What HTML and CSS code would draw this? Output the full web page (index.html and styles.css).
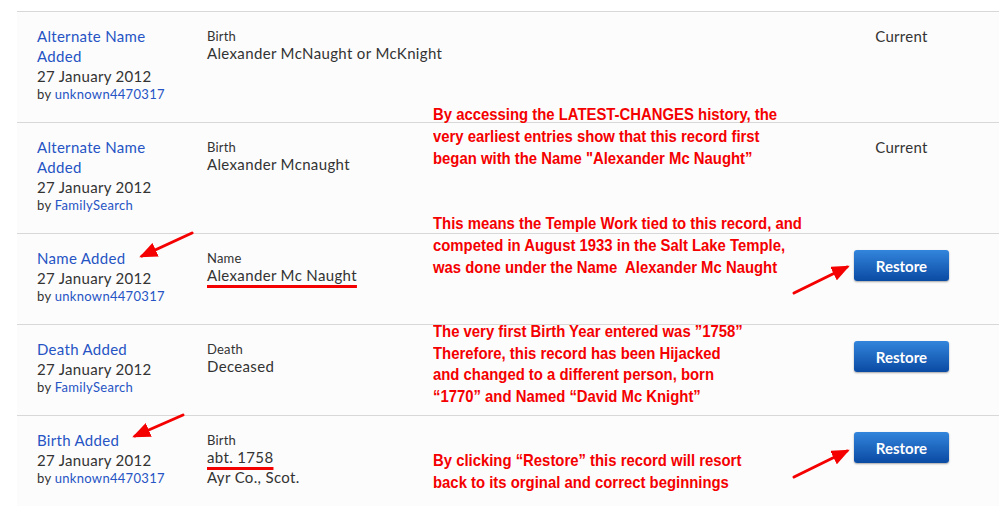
FILE: index.html
```html
<html lang="en">
<head>
<title>Change History</title>
<link rel="stylesheet" href="styles.css">
</head>
<body>
  <div class="page">
    <div class="history">
      <div class="row">
        <div class="what">
          <a class="type">Alternate Name Added</a>
          <div class="date">27 January 2012</div>
          <div class="by">by <a>unknown4470317</a></div>
        </div>
        <div class="detail">
          <div class="label">Birth</div>
          <div class="value">Alexander McNaught or McKnight</div>
        </div>
        <div class="action"><span class="current">Current</span></div>
      </div>
      <div class="row">
        <div class="what">
          <a class="type">Alternate Name Added</a>
          <div class="date">27 January 2012</div>
          <div class="by">by <a>FamilySearch</a></div>
        </div>
        <div class="detail">
          <div class="label">Birth</div>
          <div class="value">Alexander Mcnaught</div>
        </div>
        <div class="action"><span class="current">Current</span></div>
      </div>
      <div class="row">
        <div class="what">
          <a class="type">Name Added</a>
          <div class="date">27 January 2012</div>
          <div class="by">by <a>unknown4470317</a></div>
        </div>
        <div class="detail">
          <div class="label">Name</div>
          <div class="value"><span class="marked">Alexander Mc Naught</span></div>
        </div>
        <div class="action"><button class="restore">Restore</button></div>
      </div>
      <div class="row">
        <div class="what">
          <a class="type">Death Added</a>
          <div class="date">27 January 2012</div>
          <div class="by">by <a>FamilySearch</a></div>
        </div>
        <div class="detail">
          <div class="label">Death</div>
          <div class="value">Deceased</div>
        </div>
        <div class="action"><button class="restore">Restore</button></div>
      </div>
      <div class="row">
        <div class="what">
          <a class="type">Birth Added</a>
          <div class="date">27 January 2012</div>
          <div class="by">by <a>unknown4470317</a></div>
        </div>
        <div class="detail">
          <div class="label">Birth</div>
          <div class="value"><span class="marked">abt. 1758</span></div>
          <div class="value">Ayr Co., Scot.</div>
        </div>
        <div class="action"><button class="restore">Restore</button></div>
      </div>
    </div>

    <!-- annotations drawn over the list -->
    <div class="note note1">By accessing the LATEST-CHANGES history, the<br>very earliest entries show that this record first<br>began with the Name "Alexander Mc Naught&rdquo;</div>
    <div class="note note2">This means the Temple Work tied to this record, and<br>competed in August 1933 in the Salt Lake Temple,<br>was done under the Name&nbsp; Alexander Mc Naught</div>
    <div class="note note3">The very first Birth Year entered was &rdquo;1758&rdquo;<br>Therefore, this record has been Hijacked<br>and changed to a different person, born<br>&ldquo;1770&rdquo; and Named &ldquo;David Mc Knight&rdquo;</div>
    <div class="note note4">By clicking &ldquo;Restore&rdquo; this record will resort<br>back to its orginal and correct beginnings</div>

    <svg class="arrows" width="999" height="512" viewBox="0 0 999 512">
      <defs>
        <marker id="head" markerWidth="6" markerHeight="5" refX="5" refY="2.5" orient="auto" markerUnits="strokeWidth">
          <path d="M0,0 L6,2.5 L0,5 Z" fill="#f40000"/>
        </marker>
      </defs>
      <g stroke="#f40000" stroke-width="3" stroke-linecap="round" marker-end="url(#head)">
        <line x1="192" y1="233" x2="142" y2="256"/>
        <line x1="183" y1="415" x2="135" y2="436"/>
        <line x1="794" y1="293" x2="847" y2="267"/>
        <line x1="794" y1="477" x2="847" y2="451"/>
      </g>
    </svg>
  </div>
</body>
</html>
```

FILE: styles.css
```css
body {
  margin: 0;
  background: #fff;
  font-family: "Lato", "Liberation Sans", sans-serif;
  color: #333;
}

.page {
  position: relative;
  width: 999px;
  height: 512px;
  overflow: hidden;
}

.history {
  margin: 11px 0 0 17px;
  background: #fcfcfc;
}

.row {
  display: grid;
  grid-template-columns: 170px 1fr 95px;
  padding: 14px 50px 19px 20px;
  border-top: 1px solid #d8d8d8;
}

a {
  color: #2654c4;
  text-decoration: none;
}

.type {
  display: block;
  font-size: 15px;
  line-height: 20px;
  width: 130px;
  letter-spacing: 0.3px;
}

.date {
  font-size: 15px;
  line-height: 20px;
  letter-spacing: 0.3px;
}

.by {
  font-size: 13px;
  line-height: 17px;
  letter-spacing: 0.3px;
}

.label {
  font-size: 13px;
  line-height: 14px;
  padding-top: 3px;
  letter-spacing: 0.2px;
}

.value {
  font-size: 15px;
  line-height: 20px;
  letter-spacing: 0.35px;
}

.marked {
  text-decoration: underline 3px #f40000;
  text-underline-offset: 4px;
}

.action {
  text-align: center;
}

.current {
  font-size: 15px;
  line-height: 20px;
  letter-spacing: 0.3px;
}

.restore {
  margin-top: 2px;
  width: 95px;
  height: 31px;
  border: none;
  border-radius: 3px;
  background: linear-gradient(#3385dc, #0a4aa3);
  box-shadow: 0 1px 2px rgba(0, 0, 0, 0.35);
  color: #fff;
  font-family: "Lato", "Liberation Sans", sans-serif;
  font-size: 15px;
  font-weight: bold;
  cursor: pointer;
}

.note {
  position: absolute;
  left: 433px;
  font-family: "Liberation Sans", sans-serif;
  font-weight: bold;
  font-size: 17px;
  line-height: 22px;
  color: #f40000;
  white-space: nowrap;
  transform: scaleX(0.875);
  transform-origin: 0 0;
}

.note1 { top: 104px; }
.note2 { top: 213px; }
.note3 { top: 321px; line-height: 21.5px; }
.note4 { top: 450px; }

.arrows {
  position: absolute;
  left: 0;
  top: 0;
  pointer-events: none;
}
```
